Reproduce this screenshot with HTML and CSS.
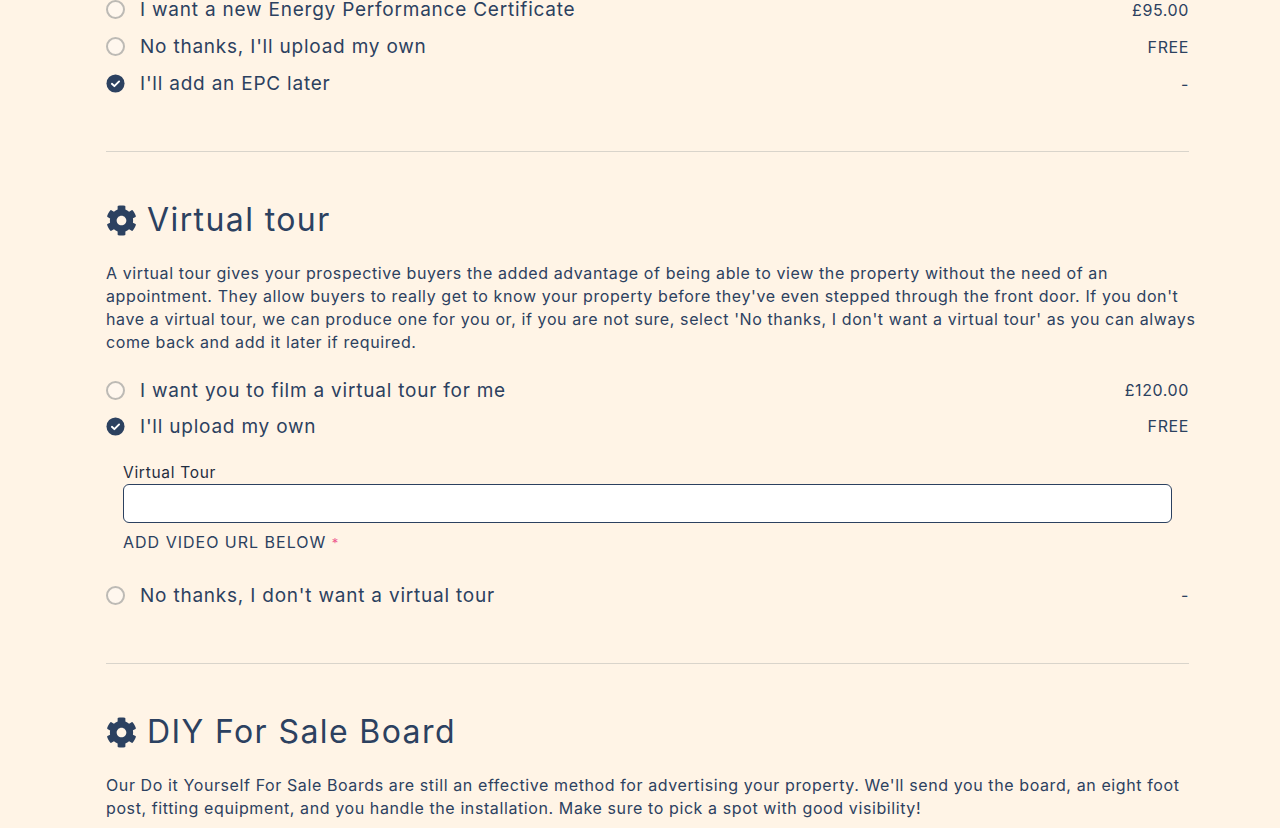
FILE: index.html
```html
<!DOCTYPE html>
<html lang="en">
<head>
    <meta charset="UTF-8">
    <meta name="viewport" content="width=device-width, initial-scale=1.0">
    <title>Your listing extras</title>
    <link rel="stylesheet" href="styles.css">
</head>
<body>
    <svg class="defs" width="0" height="0">
        <symbol id="cog" viewBox="0 0 512 512"><path d="M487.4 315.7l-42.6-24.6c4.3-23.2 4.3-47 0-70.2l42.6-24.6c4.9-2.8 7.1-8.6 5.5-14-11.1-35.6-30-67.8-54.7-94.6-3.8-4.1-10-5.1-14.8-2.3L380.8 110c-17.9-15.4-38.5-27.3-60.8-35.1V25.8c0-5.6-3.9-10.5-9.4-11.7-36.7-8.2-74.3-7.8-109.2 0-5.5 1.2-9.4 6.1-9.4 11.7V75c-22.2 7.9-42.8 19.8-60.8 35.1L88.7 85.5c-4.9-2.8-11-1.9-14.8 2.3-24.7 26.7-43.6 58.9-54.7 94.6-1.7 5.4.6 11.2 5.5 14L67.3 221c-4.3 23.2-4.3 47 0 70.2l-42.6 24.6c-4.9 2.8-7.1 8.6-5.5 14 11.1 35.6 30 67.8 54.7 94.6 3.8 4.1 10 5.1 14.8 2.3l42.6-24.6c17.9 15.4 38.5 27.3 60.8 35.1v49.2c0 5.6 3.9 10.5 9.4 11.7 36.7 8.2 74.3 7.8 109.2 0 5.5-1.2 9.4-6.1 9.4-11.7v-49.2c22.2-7.9 42.8-19.8 60.8-35.1l42.6 24.6c4.9 2.8 11 1.9 14.8-2.3 24.7-26.7 43.6-58.9 54.7-94.6 1.5-5.5-.7-11.3-5.6-14.1zM256 336c-44.1 0-80-35.9-80-80s35.9-80 80-80 80 35.9 80 80-35.9 80-80 80z"/></symbol>
        <symbol id="checked" viewBox="0 0 20 20"><circle cx="10" cy="10" r="9.5"/><path class="tick" d="M6.2 10.3l2.6 2.5 5-5"/></symbol>
    </svg>

    <main class="page">
        <section class="extra first">
            <div class="option">
                <span class="radio"></span>
                <span class="option-label">I want a new Energy Performance Certificate</span>
                <span class="price">£95.00</span>
            </div>
            <div class="option">
                <span class="radio"></span>
                <span class="option-label">No thanks, I'll upload my own</span>
                <span class="price">FREE</span>
            </div>
            <div class="option">
                <svg class="radio-on"><use href="#checked"></use></svg>
                <span class="option-label">I'll add an EPC later</span>
                <span class="price">-</span>
            </div>
        </section>

        <section class="extra">
            <h2><svg class="cog"><use href="#cog"></use></svg>Virtual tour</h2>
            <p>A virtual tour gives your prospective buyers the added advantage of being able to view the property without the need of an appointment. They allow buyers to really get to know your property before they've even stepped through the front door. If you don't have a virtual tour, we can produce one for you or, if you are not sure, select 'No thanks, I don't want a virtual tour' as you can always come back and add it later if required.</p>
            <div class="option tight">
                <span class="radio"></span>
                <span class="option-label">I want you to film a virtual tour for me</span>
                <span class="price">£120.00</span>
            </div>
            <div class="option tight">
                <svg class="radio-on"><use href="#checked"></use></svg>
                <span class="option-label">I'll upload my own</span>
                <span class="price">FREE</span>
            </div>
            <div class="form-group">
                <label for="tourUrl">Virtual Tour</label>
                <input type="text" id="tourUrl">
                <div class="hint">ADD VIDEO URL BELOW <span class="req">*</span></div>
            </div>
            <div class="option tight">
                <span class="radio"></span>
                <span class="option-label">No thanks, I don't want a virtual tour</span>
                <span class="price">-</span>
            </div>
        </section>

        <section class="extra last">
            <h2><svg class="cog"><use href="#cog"></use></svg>DIY For Sale Board</h2>
            <p>Our Do it Yourself For Sale Boards are still an effective method for advertising your property. We'll send you the board, an eight foot post, fitting equipment, and you handle the installation. Make sure to pick a spot with good visibility!</p>
        </section>
    </main>
</body>
</html>
```

FILE: styles.css
```css
html, body { height: 828px; overflow: hidden; }
body { margin: 0; background: #fff4e6; color: #2c4160; font-family: Inter, "Noto Sans", sans-serif; font-size: 15px; }
.defs { display: block; }
.page { width: 1110px; height: 837px; overflow: hidden; margin: -9px 0 0 106px; }

.extra { width: 1083px; padding-bottom: 50px; border-bottom: 1px solid #d9d4cb; margin-bottom: 44px; }
.extra.first { padding-bottom: 49px; }
.extra.last { border-bottom: 0; margin-bottom: 0; padding-bottom: 0; }

h2 { display: flex; align-items: center; gap: 10px; margin: 0 0 18px; font-size: 32px; line-height: 48px; font-weight: 400; letter-spacing: 1.4px; }
.cog { width: 31px; height: 31px; fill: #2c4160; flex: none; }
p { margin: 0 -12px 18px 0; line-height: 23px; font-size: 16px; letter-spacing: 0.6px; }

.option { display: flex; align-items: center; height: 37px; }
.option.tight { height: 36px; }
.radio { width: 15px; height: 15px; border: 2px solid #bdbab5; border-radius: 50%; background: #fff7ee; flex: none; }
.radio-on { width: 19px; height: 19px; fill: #2c4160; flex: none; }
.tick { fill: none; stroke: #fff; stroke-width: 2; stroke-linecap: round; stroke-linejoin: round; }
.option-label { margin-left: 15px; flex: 1; font-size: 19px; letter-spacing: 0.78px; }
.price { font-size: 16px; letter-spacing: 0.6px; }

.form-group { padding: 18px 17px 0 17px; margin-bottom: 25px; }
label { display: block; font-size: 15.5px; line-height: 22px; letter-spacing: 0.7px; color: #1f2d40; }
input { display: block; width: 100%; height: 39px; box-sizing: border-box; background: #fff; border: 1px solid #2c4160; border-radius: 6px; }
.hint { margin-top: 9px; height: 20px; font-size: 16px; line-height: 20px; letter-spacing: 1px; }
.req { color: #ee5a8f; font-size: 13px; line-height: 1; letter-spacing: 0; }
```
